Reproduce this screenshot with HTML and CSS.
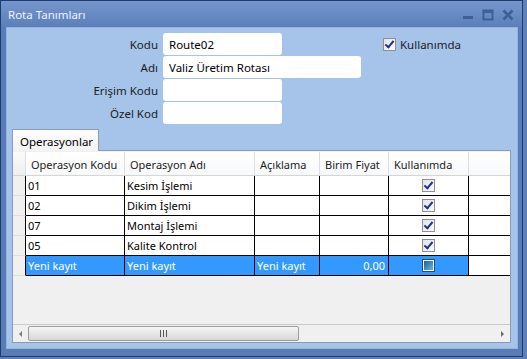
FILE: index.html
```html
<!DOCTYPE html>
<html lang="tr">
<head>
    <meta charset="UTF-8">
    <title>Rota Tanımları</title>
    <link rel="stylesheet" href="styles.css">
</head>
<body>
    <div class="window">
        <div class="titlebar">
            <span class="title">Rota Tanımları</span>
            <div class="controls">
                <svg width="12" height="12" viewBox="0 0 12 12"><rect x="1" y="7" width="10" height="3" fill="#3f5f95"/></svg>
                <svg width="12" height="12" viewBox="0 0 12 12"><rect x="1.5" y="1.5" width="9" height="9" fill="none" stroke="#3f5f95" stroke-width="2"/><rect x="1" y="1" width="10" height="3" fill="#3f5f95"/></svg>
                <svg width="12" height="12" viewBox="0 0 12 12"><path d="M1.5 1.5 L10.5 10.5 M10.5 1.5 L1.5 10.5" stroke="#3f5f95" stroke-width="2.6"/></svg>
            </div>
        </div>
        <div class="frame">
            <div class="client">
                <div class="top">
                    <div class="fields">
                        <div class="field"><span class="lbl">Kodu</span><input class="txt short" value="Route02"></div>
                        <div class="field"><span class="lbl">Adı</span><input class="txt long" value="Valiz Üretim Rotası"></div>
                        <div class="field"><span class="lbl">Erişim Kodu</span><input class="txt short" value=""></div>
                        <div class="field"><span class="lbl">Özel Kod</span><input class="txt short" value=""></div>
                    </div>
                    <div class="active">
                        <span class="chk on"></span>
                        <span>Kullanımda</span>
                    </div>
                </div>

                <div class="tabs"><div class="tab">Operasyonlar</div></div>
                <div class="tabpanel">
                    <div class="grid">
                        <div class="row head">
                            <div class="c rh"></div>
                            <div class="c w1">Operasyon Kodu</div>
                            <div class="c w2">Operasyon Adı</div>
                            <div class="c w3">Açıklama</div>
                            <div class="c w4">Birim Fiyat</div>
                            <div class="c w5">Kullanımda</div>
                            <div class="c fill"></div>
                        </div>
                        <div class="row">
                            <div class="c rh"></div>
                            <div class="c w1">01</div>
                            <div class="c w2">Kesim İşlemi</div>
                            <div class="c w3"></div>
                            <div class="c w4"></div>
                            <div class="c w5 mid"><span class="chk on"></span></div>
                            <div class="c fill"></div>
                        </div>
                        <div class="row">
                            <div class="c rh"></div>
                            <div class="c w1">02</div>
                            <div class="c w2">Dikim İşlemi</div>
                            <div class="c w3"></div>
                            <div class="c w4"></div>
                            <div class="c w5 mid"><span class="chk on"></span></div>
                            <div class="c fill"></div>
                        </div>
                        <div class="row">
                            <div class="c rh"></div>
                            <div class="c w1">07</div>
                            <div class="c w2">Montaj İşlemi</div>
                            <div class="c w3"></div>
                            <div class="c w4"></div>
                            <div class="c w5 mid"><span class="chk on"></span></div>
                            <div class="c fill"></div>
                        </div>
                        <div class="row">
                            <div class="c rh"></div>
                            <div class="c w1">05</div>
                            <div class="c w2">Kalite Kontrol</div>
                            <div class="c w3"></div>
                            <div class="c w4"></div>
                            <div class="c w5 mid"><span class="chk on"></span></div>
                            <div class="c fill"></div>
                        </div>
                        <div class="row selected">
                            <div class="c rh"></div>
                            <div class="c w1">Yeni kayıt</div>
                            <div class="c w2">Yeni kayıt</div>
                            <div class="c w3">Yeni kayıt</div>
                            <div class="c w4 num">0,00</div>
                            <div class="c w5 mid"><span class="chk blank"></span></div>
                            <div class="c fill"></div>
                        </div>
                    </div>
                    <div class="hscroll">
                        <span class="arrow left"></span>
                        <div class="track">
                            <div class="thumb"><span class="grip"></span></div>
                        </div>
                        <span class="arrow right"></span>
                    </div>
                </div>
            </div>
        </div>
    </div>
</body>
</html>
```
FILE: styles.css
```css
body {
    margin: 0;
    background-color: #5f80b9;
    font-family: "Noto Sans", "Open Sans", sans-serif;
    font-size: 11px;
    color: #000;
}
.window {
    width: 523px;
    height: 357px;
    box-sizing: border-box;
    border: 1px solid #1f3c6f;
    background-color: #5a7cb6;
    display: flex;
    flex-direction: column;
}
.titlebar {
    height: 26px;
    flex: none;
    display: flex;
    align-items: center;
    justify-content: space-between;
    padding: 0 8px 0 7px;
    background: linear-gradient(#7595cb, #6a8cc5 45%, #5c7fba);
}
.title {
    color: #eef3fb;
    font-size: 11.5px;
}
.controls {
    display: flex;
    gap: 8px;
    padding-top: 2px;
}
.frame {
    flex: 1;
    padding: 0 5px 7px 5px;
    display: flex;
}
.client {
    flex: 1;
    background-color: #a6c4ea;
    border: 1px solid #93b3e0;
    padding: 5px 6px 0 5px;
    display: flex;
    flex-direction: column;
}
.top {
    display: flex;
}
.fields {
    display: flex;
    flex-direction: column;
    gap: 1px;
}
.field {
    display: flex;
    align-items: center;
}
.lbl {
    width: 146px;
    text-align: right;
    padding-right: 5px;
    color: #1c1c1c;
    font-size: 11.5px;
}
.txt {
    height: 22px;
    box-sizing: border-box;
    border: none;
    border-radius: 3px;
    background-color: #fff;
    font: inherit;
    font-size: 11.5px;
    padding: 0 6px;
    color: #000;
}
.short { width: 119px; }
.long { width: 198px; }
.active {
    display: flex;
    align-items: center;
    gap: 4px;
    margin: 4px 0 0 22px;
    height: 14px;
    color: #1c1c1c;
    font-size: 11.5px;
}
.chk {
    display: inline-block;
    width: 13px;
    height: 13px;
    box-sizing: border-box;
    border: 1px solid #8f8f8f;
    background: linear-gradient(135deg, #dfe3e9, #fbfbfc);
    position: relative;
}
.chk.on::after {
    content: '';
    position: absolute;
    left: 3px;
    top: 0px;
    width: 3px;
    height: 7px;
    border: solid #21338a;
    border-width: 0 2px 2px 0;
    transform: rotate(40deg);
}
.chk.blank {
    border-color: #1c4d80;
    background: #fff;
}
.chk.blank::after {
    content: '';
    position: absolute;
    left: 1px;
    top: 1px;
    width: 9px;
    height: 9px;
    background: linear-gradient(135deg, #1f5e9a, #6cb6de);
}
.tabs {
    display: flex;
    margin-top: 5px;
}
.tab {
    width: 87px;
    height: 22px;
    box-sizing: border-box;
    border: 1px solid #8c9bb2;
    border-bottom: none;
    background: linear-gradient(#fdfdfd, #f2f2f2);
    padding: 4px 0 0 7px;
    margin-bottom: -1px;
    position: relative;
    font-size: 11.5px;
}
.tabpanel {
    width: 499px;
    height: 193px;
    box-sizing: border-box;
    border: 1px solid #8c9bb2;
    background-color: #f0f0f0;
    padding: 1px 0 0 0;
    display: flex;
    flex-direction: column;
}
.grid {
    flex: 1;
}
.row {
    display: flex;
    height: 20px;
    background-color: #fff;
}
.c {
    box-sizing: border-box;
    height: 100%;
    border-right: 1px solid #000;
    border-bottom: 1px solid #000;
    padding: 2px 0 0 2px;
    white-space: nowrap;
    overflow: hidden;
}
.rh {
    width: 13px;
    background-color: #f0f0f0;
    border-bottom-color: #dedede;
}
.w1 { width: 99px; }
.w2 { width: 130px; }
.w3 { width: 65px; }
.w4 { width: 69px; }
.w5 { width: 80px; }
.fill { flex: 1; border-right: none; background-color: #fff; }
.mid {
    display: flex;
    justify-content: center;
    padding: 3px 0 0 0;
}
.num {
    text-align: right;
    padding: 2px 3px 0 0;
}
.row.head {
    height: 24px;
    background: linear-gradient(#ffffff, #f7f8fa);
}
.row.head .c {
    border-right-color: #dadde2;
    border-bottom-color: #d5d5d5;
    padding: 5px 0 0 5px;
    color: #1c1c1c;
}
.row.head .rh { background: linear-gradient(#fbfbfb, #eeeeee); }
.row.head .fill { background: transparent; }
.row.selected { background-color: #3399ff; color: #fff; }
.row.selected .fill { background-color: #fff; }
.row.selected .rh { background-color: #f0f0f0; }
.hscroll {
    height: 17px;
    display: flex;
    align-items: center;
    border-top: 1px solid #c9c9c9;
    background-color: #f0f0f0;
}
.arrow {
    width: 15px;
    display: flex;
    justify-content: center;
}
.arrow::before {
    content: '';
    border: 3px solid transparent;
}
.arrow.left::before { border-right: 3px solid #7a7a7a; border-left: none; }
.arrow.right::before { border-left: 3px solid #6a6a6a; border-right: none; }
.track {
    flex: 1;
    height: 15px;
}
.thumb {
    width: 271px;
    height: 15px;
    box-sizing: border-box;
    border: 1px solid #9c9c9c;
    border-radius: 2px;
    background: linear-gradient(#f6f6f6, #e6e6e6 50%, #d7d7d7);
    display: flex;
    justify-content: center;
    align-items: center;
}
.grip {
    width: 7px;
    height: 7px;
    background: repeating-linear-gradient(90deg, #555 0 1px, transparent 1px 3px);
}
```
